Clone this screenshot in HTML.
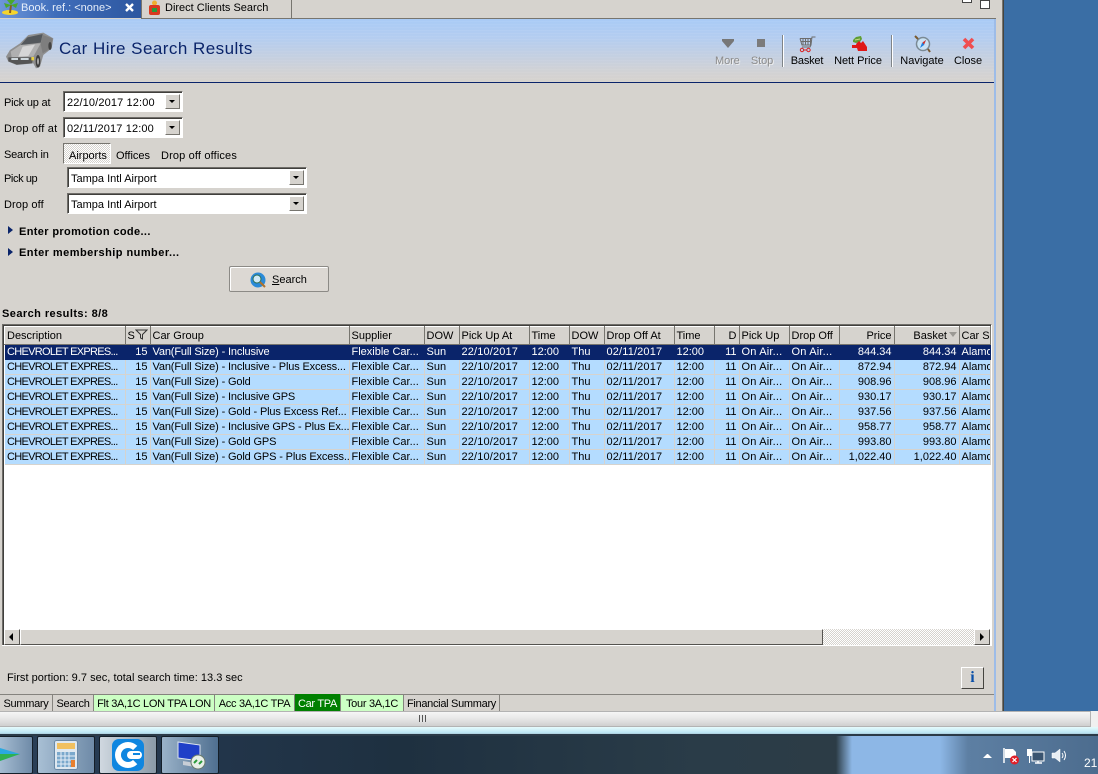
<!DOCTYPE html>
<html><head><meta charset="utf-8"><title>Car Hire Search Results</title>
<style>
html,body{margin:0;padding:0}
body{width:1098px;height:774px;position:relative;overflow:hidden;background:#d6d3ce;font:11px/13px "Liberation Sans",Arial,sans-serif;color:#000}
.a{position:absolute;white-space:nowrap}
.field{position:absolute;background:#fff;border:1px solid;border-color:#6f6d69 #fff #fff #6f6d69;box-shadow:inset 1px 1px 0 #403f3c;box-sizing:border-box}
.drop{position:absolute;width:15px;height:15px;background:#d6d3ce;border:1px solid;border-color:#fff #77756f #77756f #fff;box-sizing:border-box}
.drop:after{content:"";position:absolute;left:3px;top:5px;border:3px solid transparent;border-top:3px solid #000;border-bottom:0}
.tri{position:absolute;width:0;height:0;border-left:5px solid #0a246a;border-top:4.5px solid transparent;border-bottom:4.5px solid transparent}
table{position:absolute;left:4px;top:326px;width:986px;table-layout:fixed;border-collapse:collapse}
td,th{padding:0 2.500px 0 1.500px;overflow:hidden;white-space:nowrap;font-weight:normal;text-align:left;box-sizing:border-box}
th{height:18px;padding-top:0;line-height:14px;background:#d6d3ce;border:1px solid;border-color:#fff #77756f #77756f #fff}
td{height:15px;background:#b4dcff;border-right:1px solid #d6d3ce;border-bottom:1px solid #d6d3ce;line-height:14px}
td:nth-child(1){letter-spacing:-.7px;padding-left:2.500px;padding-right:0}
td:nth-child(3){letter-spacing:-.15px}
td:nth-child(6),td:nth-child(9){letter-spacing:.15px}
td:nth-child(12),td:nth-child(13){letter-spacing:.2px}
tr.s td{background:#0a246a;color:#fff;border-color:#0a246a}
.r{text-align:right!important}
.tab{position:absolute;top:695px;height:16px;line-height:18px;text-align:center;border-right:1px solid #85837e;box-sizing:border-box;white-space:nowrap;letter-spacing:-.3px}
.g{background:#ccffc4}
.tool{position:absolute;top:55px;text-align:center;white-space:nowrap;line-height:13px}
.off{color:#8b8b8b;text-shadow:1px 1px 0 #eee}
.sep{position:absolute;top:35px;width:2px;height:32px;background:linear-gradient(90deg,#7f8488 50%,#fff 50%)}
.tb{position:absolute;top:736px;height:38px;box-sizing:border-box;border:1px solid #141e28;border-radius:2px;background:linear-gradient(90deg,#a8bfd4,#6f8ba8)}
</style></head><body>

<!-- desktop and window frame -->
<div class="a" style="left:1004px;top:0;width:94px;height:711px;background:#3a6ea5"></div>
<div class="a" style="left:994px;top:19px;width:2px;height:692px;background:#9dbce8"></div>
<div class="a" style="left:1003px;top:0;width:1px;height:711px;background:#45443f"></div>
<div class="a" style="left:1002px;top:0;width:1px;height:711px;background:#77756f"></div>

<!-- top tabs -->
<div class="a" style="left:0;top:0;width:141px;height:18px;background:linear-gradient(90deg,#6d96da,#3f6dba 40%,#2d57a0)"></div>
<div class="a" style="left:141px;top:0;width:149px;height:18px;background:#d6d3ce;border-left:1px solid #77756f;border-right:1px solid #77756f;border-bottom:1px solid #77756f"></div>
<div class="a" style="left:291px;top:18px;width:705px;height:1px;background:#77756f"></div>
<svg class="a" style="left:1px;top:0" width="18" height="16" viewBox="0 0 18 16"><ellipse cx="9" cy="12.500" rx="8" ry="2.500" fill="#f6d52c"/><path d="M9 13 L10 5" stroke="#8a5a20" stroke-width="2"/><path d="M10 5 L3 3 L5 8 Z M10 5 L17 3 L15 8 Z M10 5 L6 0 L14 0 Z" fill="#4aa82c"/></svg>
<div class="a" style="left:21px;top:2px;color:#e6eefa">Book. ref.: &lt;none&gt;</div>
<svg class="a" style="left:124px;top:2px" width="11" height="11" viewBox="0 0 11 11"><path d="M2 2 L9 9 M9 2 L2 9" stroke="#fff" stroke-width="2.400"/></svg>
<svg class="a" style="left:147px;top:0" width="15" height="16" viewBox="0 0 15 16"><circle cx="7.500" cy="3" r="2.500" fill="#eeb02e"/><rect x="2" y="5" width="11" height="10" rx="2" fill="#d83a20"/><rect x="5" y="8" width="5" height="4" fill="#2a9a3a"/></svg>
<div class="a" style="left:165px;top:2px">Direct Clients Search</div>
<div class="a" style="left:962px;top:0;width:8px;height:2px;border:1px solid #444;border-top:0;background:#fff"></div>
<div class="a" style="left:980px;top:0;width:8px;height:8px;border:1px solid #444;border-top:0;background:#fff;box-shadow:inset 0 1px 0 #444"></div>

<!-- header band -->
<div class="a" style="left:0;top:19px;width:994px;height:63px;background:repeating-linear-gradient(0deg,rgba(255,255,255,.05) 0 1px,transparent 1px 3px),linear-gradient(#a9cbf6,#b4cdf0 30%,#d2d2d4 85%,#d6d3ce)"></div>
<div class="a" style="left:0;top:82px;width:994px;height:1px;background:#0a246a"></div>
<svg class="a" style="left:0;top:0" width="70" height="75" viewBox="0 0 210 225">
<path d="M18 170 L30 150 L60 130 L85 105 L130 98 L160 115 L155 145 L130 165 L120 200 L108 205 L100 190 L50 195 L25 185 Z" fill="#8f8f8f"/>
<path d="M82 112 L128 102 L122 128 L62 135 Z" fill="#54585c"/>
<path d="M32 155 L62 135 L122 130 L100 170 L35 172 Z" fill="#b0b0b0"/>
<path d="M68 140 L105 134 L85 168 L55 170 Z" fill="#d6d6d6"/>
<path d="M128 105 L158 115 L152 145 L128 160 L122 132 Z" fill="#7e7e7e"/>
<path d="M25 172 L100 172 L96 190 L50 194 L25 184 Z" fill="#555"/>
<rect x="34" y="174" width="20" height="6" fill="#cfd8dc"/><rect x="62" y="174" width="24" height="6" fill="#cfd8dc"/>
<rect x="94" y="171" width="8" height="10" fill="#e8d040"/>
<ellipse cx="114" cy="184" rx="7" ry="19" fill="#3c3c3c"/><ellipse cx="114" cy="184" rx="3" ry="10" fill="#aaa"/>
<ellipse cx="150" cy="138" rx="5" ry="12" fill="#444"/>
</svg>
<div class="a" style="left:59px;top:39px;font-size:17px;line-height:20px;color:#0a246a;letter-spacing:.46px">Car Hire Search Results</div>

<!-- toolbar -->
<svg class="a" style="left:722px;top:38px" width="12" height="12" viewBox="0 0 12 12"><path d="M0 1 H12 V3 L6 10 L0 3 Z" fill="#777"/></svg>
<div class="a" style="left:757px;top:39px;width:8px;height:8px;background:#7b7b7b"></div>
<div class="tool off" style="left:715px;width:24px;letter-spacing:-.1px">More</div>
<div class="tool off" style="left:750px;width:24px;letter-spacing:-.1px">Stop</div>
<div class="sep" style="left:782px"></div>
<svg class="a" style="left:798px;top:35px" width="18" height="18" viewBox="0 0 18 18"><path d="M17.500 2 H14 L13 10 L12 12 H4 M2 3.500 H14 M2 3.500 L4 10 H13 M5 3.500 V10 M7.500 3.500 V10 M10 3.500 V10 M12.500 3.500 V10 M2.500 6.500 H13.500" fill="none" stroke="#6c6c6c" stroke-width="1"/><circle cx="4" cy="15" r="1.700" fill="none" stroke="#d92020"/><circle cx="10.500" cy="15" r="1.700" fill="none" stroke="#d92020"/><path d="M5.700 15 H8.800" stroke="#d92020"/></svg>
<div class="tool" style="left:790px;width:34px;letter-spacing:-.2px">Basket</div>
<svg class="a" style="left:851px;top:36px" width="17" height="16" viewBox="0 0 17 16"><path d="M2 4 L5 1 L10 0 L11 3 L9 6 L5 7 L2 6 Z" fill="#5e9e34"/><path d="M4 4 L9 3" stroke="#c9d88a"/><rect x="1" y="9" width="6" height="3" fill="#e01818"/><path d="M5 8 L8 5 L10 7 L12 5 L14 8 L16 11 L16 15 L7 15 L6 12 Z" fill="#e01818"/></svg>
<div class="tool" style="left:832px;width:52px;letter-spacing:-.05px">Nett Price</div>
<div class="sep" style="left:891px"></div>
<svg class="a" style="left:914px;top:35px" width="18" height="18" viewBox="0 0 18 18"><circle cx="9" cy="9" r="6.500" fill="#c9e2f4" stroke="#7b8a94" stroke-width="1.500"/><path d="M12 5 L8 8 L6 13 L10 10 Z" fill="#1e80e0"/><path d="M12 5 L8.500 7.500 L10 9.500 Z" fill="#e03020"/><path d="M1 1 L4 4 M14 14 L16 17" stroke="#7a5a30" stroke-width="2"/></svg>
<div class="tool" style="left:898px;width:48px">Navigate</div>
<svg class="a" style="left:962px;top:37px" width="13" height="13" viewBox="0 0 13 13"><path d="M2 2 L11 11 M11 2 L2 11" stroke="#ef4d50" stroke-width="3.600"/></svg>
<div class="tool" style="left:952px;width:32px">Close</div>

<!-- form -->
<div class="a" style="left:4px;top:97px;letter-spacing:-.2px">Pick up at</div>
<div class="field" style="left:63px;top:91px;width:120px;height:21px"></div>
<div class="a" style="left:67px;top:97px;letter-spacing:.13px">22/10/2017 12:00</div>
<div class="drop" style="left:165px;top:94px"></div>
<div class="a" style="left:4px;top:123px;letter-spacing:.2px">Drop off at</div>
<div class="field" style="left:63px;top:117px;width:120px;height:21px"></div>
<div class="a" style="left:67px;top:123px;letter-spacing:.13px">02/11/2017 12:00</div>
<div class="drop" style="left:165px;top:120px"></div>
<div class="a" style="left:4px;top:149px;letter-spacing:-.2px">Search in</div>
<div class="a" style="left:63px;top:143px;width:48px;height:21px;box-sizing:border-box;border:1px solid;border-color:#77756f #fff #fff #77756f;background:repeating-conic-gradient(#fff 0 25%,#d6d3ce 0 50%) 0 0/2px 2px"></div>
<div class="a" style="left:69px;top:150px">Airports</div>
<div class="a" style="left:116px;top:150px">Offices</div>
<div class="a" style="left:161px;top:150px;letter-spacing:.15px">Drop off offices</div>
<div class="a" style="left:4px;top:173px;letter-spacing:-.4px">Pick up</div>
<div class="field" style="left:67px;top:167px;width:240px;height:21px"></div>
<div class="a" style="left:71px;top:173px">Tampa Intl Airport</div>
<div class="drop" style="left:289px;top:170px"></div>
<div class="a" style="left:4px;top:199px;letter-spacing:.1px">Drop off</div>
<div class="field" style="left:67px;top:193px;width:240px;height:21px"></div>
<div class="a" style="left:71px;top:199px">Tampa Intl Airport</div>
<div class="drop" style="left:289px;top:196px"></div>
<div class="tri" style="left:8px;top:226px"></div>
<div class="a" style="left:19px;top:226px;font-weight:bold;letter-spacing:.36px">Enter promotion code...</div>
<div class="tri" style="left:8px;top:248px"></div>
<div class="a" style="left:19px;top:247px;font-weight:bold;letter-spacing:.46px">Enter membership number...</div>
<div class="a" style="left:229px;top:266px;width:100px;height:26px;box-sizing:border-box;border:1px solid #8c8a86;border-radius:2px;background:#dcd8d3;box-shadow:inset 1px 1px 0 #fff"></div>
<svg class="a" style="left:250px;top:272px" width="17" height="17" viewBox="0 0 17 17"><circle cx="8" cy="8" r="7.500" fill="#2a8ad8"/><circle cx="7" cy="7" r="4" fill="#cfe9f7" stroke="#2c6f55"/><path d="M10 10 L15 15" stroke="#b0722c" stroke-width="2"/></svg>
<div class="a" style="left:272px;top:274px"><u>S</u>earch</div>

<!-- results -->
<div class="a" style="left:2px;top:308px;font-weight:bold;letter-spacing:.44px">Search results: 8/8</div>
<div class="a" style="left:2px;top:324px;width:990px;height:322px;box-sizing:border-box;background:#fff;border:1px solid;border-color:#6f6d69 #fff #fff #6f6d69;box-shadow:inset 1px 1px 0 #403f3c"></div>
<table>
<colgroup><col style="width:121px"><col style="width:25px"><col style="width:199px"><col style="width:75px"><col style="width:35px"><col style="width:70px"><col style="width:40px"><col style="width:35px"><col style="width:70px"><col style="width:40px"><col style="width:25px"><col style="width:50px"><col style="width:50px"><col style="width:55px"><col style="width:65px"><col style="width:31px"></colgroup>
<tr><th style="padding-left:2px">Description</th><th>S</th><th>Car Group</th><th>Supplier</th><th>DOW</th><th>Pick Up At</th><th>Time</th><th>DOW</th><th>Drop Off At</th><th>Time</th><th class="r">D</th><th>Pick Up</th><th>Drop Off</th><th class="r">Price</th><th class="r" style="padding-right:12px">Basket</th><th>Car Su</th></tr>
<tr class="s"><td>CHEVROLET EXPRES...</td><td class="r">15</td><td>Van(Full Size) - Inclusive</td><td>Flexible Car...</td><td>Sun</td><td>22/10/2017</td><td>12:00</td><td>Thu</td><td>02/11/2017</td><td>12:00</td><td class="r">11</td><td>On Air...</td><td>On Air...</td><td class="r">844.34</td><td class="r">844.34</td><td>Alamo</td></tr>
<tr><td>CHEVROLET EXPRES...</td><td class="r">15</td><td>Van(Full Size) - Inclusive - Plus Excess...</td><td>Flexible Car...</td><td>Sun</td><td>22/10/2017</td><td>12:00</td><td>Thu</td><td>02/11/2017</td><td>12:00</td><td class="r">11</td><td>On Air...</td><td>On Air...</td><td class="r">872.94</td><td class="r">872.94</td><td>Alamo</td></tr>
<tr><td>CHEVROLET EXPRES...</td><td class="r">15</td><td>Van(Full Size) - Gold</td><td>Flexible Car...</td><td>Sun</td><td>22/10/2017</td><td>12:00</td><td>Thu</td><td>02/11/2017</td><td>12:00</td><td class="r">11</td><td>On Air...</td><td>On Air...</td><td class="r">908.96</td><td class="r">908.96</td><td>Alamo</td></tr>
<tr><td>CHEVROLET EXPRES...</td><td class="r">15</td><td>Van(Full Size) - Inclusive GPS</td><td>Flexible Car...</td><td>Sun</td><td>22/10/2017</td><td>12:00</td><td>Thu</td><td>02/11/2017</td><td>12:00</td><td class="r">11</td><td>On Air...</td><td>On Air...</td><td class="r">930.17</td><td class="r">930.17</td><td>Alamo</td></tr>
<tr><td>CHEVROLET EXPRES...</td><td class="r">15</td><td>Van(Full Size) - Gold - Plus Excess Ref...</td><td>Flexible Car...</td><td>Sun</td><td>22/10/2017</td><td>12:00</td><td>Thu</td><td>02/11/2017</td><td>12:00</td><td class="r">11</td><td>On Air...</td><td>On Air...</td><td class="r">937.56</td><td class="r">937.56</td><td>Alamo</td></tr>
<tr><td>CHEVROLET EXPRES...</td><td class="r">15</td><td>Van(Full Size) - Inclusive GPS - Plus Ex...</td><td>Flexible Car...</td><td>Sun</td><td>22/10/2017</td><td>12:00</td><td>Thu</td><td>02/11/2017</td><td>12:00</td><td class="r">11</td><td>On Air...</td><td>On Air...</td><td class="r">958.77</td><td class="r">958.77</td><td>Alamo</td></tr>
<tr><td>CHEVROLET EXPRES...</td><td class="r">15</td><td>Van(Full Size) - Gold GPS</td><td>Flexible Car...</td><td>Sun</td><td>22/10/2017</td><td>12:00</td><td>Thu</td><td>02/11/2017</td><td>12:00</td><td class="r">11</td><td>On Air...</td><td>On Air...</td><td class="r">993.80</td><td class="r">993.80</td><td>Alamo</td></tr>
<tr><td>CHEVROLET EXPRES...</td><td class="r">15</td><td>Van(Full Size) - Gold GPS - Plus Excess...</td><td>Flexible Car...</td><td>Sun</td><td>22/10/2017</td><td>12:00</td><td>Thu</td><td>02/11/2017</td><td>12:00</td><td class="r">11</td><td>On Air...</td><td>On Air...</td><td class="r">1,022.40</td><td class="r">1,022.40</td><td>Alamo</td></tr>
</table>
<svg class="a" style="left:135px;top:329px" width="13" height="11" viewBox="0 0 13 11"><path d="M1 1 H12 L7.500 5.500 V10 L5.500 9 V5.500 Z" fill="none" stroke="#333"/></svg>
<div class="a" style="left:949px;top:332px;width:0;height:0;border:4px solid transparent;border-top:5px solid #9b9994;border-bottom:0"></div>

<!-- table scrollbar -->
<div class="a" style="left:4px;top:629px;width:986px;height:16px;background:repeating-conic-gradient(#fff 0 25%,#d6d3ce 0 50%) 0 0/2px 2px"></div>
<div class="a" style="left:4px;top:629px;width:16px;height:16px;box-sizing:border-box;background:#d6d3ce;border:1px solid;border-color:#fff #55534f #55534f #fff"></div>
<div class="a" style="left:9px;top:633px;border:4px solid transparent;border-right:4px solid #000;border-left:0"></div>
<div class="a" style="left:20px;top:629px;width:803px;height:16px;box-sizing:border-box;background:#d6d3ce;border:1px solid;border-color:#fff #55534f #55534f #fff"></div>
<div class="a" style="left:974px;top:629px;width:16px;height:16px;box-sizing:border-box;background:#d6d3ce;border:1px solid;border-color:#fff #55534f #55534f #fff"></div>
<div class="a" style="left:980px;top:633px;border:4px solid transparent;border-left:4px solid #000;border-right:0"></div>
<div class="a" style="left:2px;top:645px;width:990px;height:1px;background:#fff"></div>

<!-- status -->
<div class="a" style="left:7px;top:672px;letter-spacing:.03px">First portion: 9.7 sec, total search time: 13.3 sec</div>
<div class="a" style="left:961px;top:667px;width:23px;height:22px;box-sizing:border-box;background:#d6d3ce;border:1px solid;border-color:#fff #45443f #45443f #fff;text-align:center;font:bold 16px/20px 'Liberation Serif',serif;color:#0a4fa8">i</div>
<div class="a" style="left:0;top:694px;width:994px;height:1px;background:#85837e"></div>

<!-- bottom tabs -->
<div class="tab" style="left:0;width:53px">Summary</div>
<div class="tab" style="left:53px;width:41px">Search</div>
<div class="tab g" style="left:94px;width:121px">Flt 3A,1C LON TPA LON</div>
<div class="tab g" style="left:215px;width:80px">Acc 3A,1C TPA</div>
<div class="tab" style="left:295px;top:694px;height:17px;line-height:20px;width:46px;background:#008000;color:#fff">Car TPA</div>
<div class="tab g" style="left:341px;width:63px">Tour 3A,1C</div>
<div class="tab" style="left:404px;width:96px">Financial Summary</div>

<!-- window scrollbar -->
<div class="a" style="left:0;top:711px;width:1098px;height:16px;background:#f0f0f0"></div>
<div class="a" style="left:0;top:711px;width:1091px;height:16px;box-sizing:border-box;border:1px solid #b3b3b3;border-left:0;background:linear-gradient(#f6f6f6,#e6e6e6 50%,#cfcfcf)"></div>
<div class="a" style="left:419px;top:715px;width:7px;height:7px;background:repeating-linear-gradient(90deg,#555 0 1px,#e6e6e6 1px 3px)"></div>

<!-- taskbar -->
<div class="a" style="left:0;top:727px;width:1098px;height:8px;background:linear-gradient(#e6fbfd,#bce6f4 70%,#9fb6c6)"></div>
<div class="a" style="left:0;top:734px;width:1098px;height:2px;background:#2a3a48"></div>
<div class="a" style="left:0;top:736px;width:1098px;height:38px;background:linear-gradient(90deg,#2a4058 0,#22354a 220px,#1e3040 400px,#2a3c48 700px,#2c3c46 836px,#8db7e6 852px,#8db7e6 940px,#5d7fa3 968px,#4c6c8e 1098px)"></div>
<div class="tb" style="left:-3px;width:36px"></div>
<svg class="a" style="left:0;top:748px" width="20" height="14" viewBox="0 0 20 14"><path d="M0 0 L20 6 L0 13 Z" fill="#2aa8e0"/><path d="M0 6 H20 L0 13 Z" fill="#30b050"/></svg>
<div class="tb" style="left:37px;width:58px"></div>
<svg class="a" style="left:54px;top:740px" width="24" height="30" viewBox="0 0 24 30"><rect x=".5" y=".5" width="23" height="29" rx="2" fill="#dfe8f0" stroke="#6a8aa8"/><rect x="3" y="3" width="18" height="6" fill="#f0c060"/><rect x="3" y="12" width="18" height="15" fill="#7aa8cc"/><path d="M7 12 V27 M11 12 V27 M15 12 V27 M3 16 H21 M3 20 H21 M3 24 H21" stroke="#e6eef6"/><rect x="17" y="20" width="4" height="7" fill="#e88030"/></svg>
<div class="tb" style="left:99px;width:58px;background:linear-gradient(90deg,#d0d8e0,#8a9aa8)"></div>
<div class="a" style="left:112px;top:739px;width:32px;height:32px;border-radius:7px;background:#0f86e0"></div>
<div class="a" style="left:115px;top:742px;width:26px;height:26px;box-sizing:border-box;border:6px solid #fff;border-right-color:transparent;border-radius:50%"></div>
<div class="a" style="left:127px;top:751px;width:15px;height:8px;background:#fff;border-radius:4px"></div>
<div class="a" style="left:133px;top:753px;width:7px;height:2px;background:#0f86e0"></div>
<div class="tb" style="left:161px;width:58px;background:linear-gradient(90deg,#9ab2c8,#4f6f90)"></div>
<svg class="a" style="left:175px;top:739px" width="32" height="32" viewBox="0 0 32 32"><path d="M3 3 L25 6 V22 L3 19 Z" fill="#1f3fc8" stroke="#dfe6f0"/><path d="M8 22 L8 26 L20 28 V24 Z" fill="#c8ced6"/><circle cx="23" cy="23" r="7" fill="#e8efe8" stroke="#6a7a6a"/><path d="M19 24 L22 21 M27 22 L24 25" stroke="#2a9a3a" stroke-width="2"/></svg>

<!-- tray -->
<div class="a" style="left:983px;top:754px;border:4px solid transparent;border-bottom:4px solid #fff;border-top:0;width:1px"></div>
<svg class="a" style="left:1003px;top:748px" width="18" height="18" viewBox="0 0 18 18"><path d="M1 0 V15" stroke="#fff" stroke-width="1.500"/><path d="M2 1 H10 L13 4 V10 H2 Z" fill="#fff"/><circle cx="11.500" cy="12" r="4.500" fill="#e01e28"/><path d="M9.500 10 L13.500 14 M13.500 10 L9.500 14" stroke="#fff" stroke-width="1.200"/></svg>
<svg class="a" style="left:1027px;top:748px" width="18" height="17" viewBox="0 0 18 17"><rect x="5" y="4" width="12" height="9" fill="#3a5470" stroke="#fff"/><path d="M8 15 H15 M11 13 V15" stroke="#fff" stroke-width="1.500"/><rect x="0" y="1" width="5" height="7" fill="#fff"/><path d="M2.500 8 V15" stroke="#fff"/></svg>
<svg class="a" style="left:1051px;top:748px" width="18" height="16" viewBox="0 0 18 16"><path d="M1 5 H4 L9 1 V14 L4 10 H1 Z" fill="#e8eef4" stroke="#fff" stroke-width=".5"/><path d="M11 5 Q13 7.500 11 10 M13 3 Q16 7.500 13 12" stroke="#fff" fill="none"/></svg>
<div class="a" style="left:1084px;top:757px;color:#fff;font-size:12px">21,</div>
</body></html>
